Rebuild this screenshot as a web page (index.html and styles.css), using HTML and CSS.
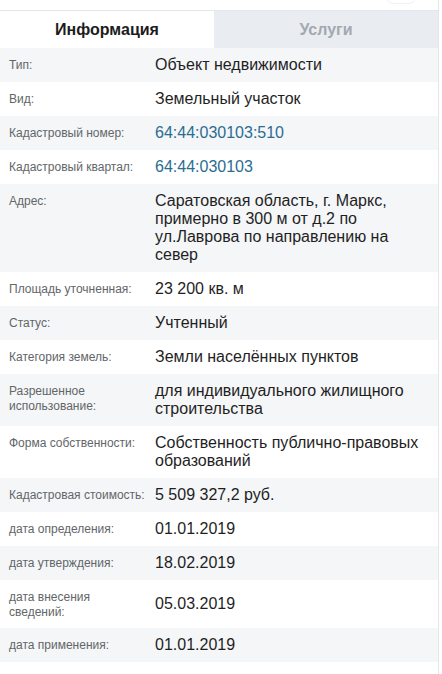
FILE: index.html
```html
<!DOCTYPE html>
<html lang="ru">
<head>
<meta charset="utf-8">
<link rel="stylesheet" href="styles.css">
</head>
<body>
<div class="panel">
  <div class="topbar"><span class="topbar-ghost"></span></div>
  <div class="tabs">
    <div class="tab tab-active">Информация</div>
    <div class="tab">Услуги</div>
  </div>
  <div class="rows">
    <div class="row row-alt"><div class="label">Тип:</div><div class="value">Объект недвижимости</div></div>
    <div class="row"><div class="label">Вид:</div><div class="value">Земельный участок</div></div>
    <div class="row row-alt"><div class="label">Кадастровый номер:</div><div class="value"><a class="link" href="#">64:44:030103:510</a></div></div>
    <div class="row"><div class="label">Кадастровый квартал:</div><div class="value"><a class="link" href="#">64:44:030103</a></div></div>
    <div class="row row-alt"><div class="label">Адрес:</div><div class="value">Саратовская область, г. Маркс, примерно в 300 м от д.2 по ул.Лаврова по направлению на север</div></div>
    <div class="row"><div class="label">Площадь уточненная:</div><div class="value">23 200 кв. м</div></div>
    <div class="row row-alt"><div class="label">Статус:</div><div class="value">Учтенный</div></div>
    <div class="row"><div class="label">Категория земель:</div><div class="value">Земли населённых пунктов</div></div>
    <div class="row row-alt"><div class="label">Разрешенное использование:</div><div class="value">для индивидуального жилищного строительства</div></div>
    <div class="row"><div class="label">Форма собственности:</div><div class="value">Собственность публично-правовых образований</div></div>
    <div class="row row-alt"><div class="label">Кадастровая стоимость:</div><div class="value">5 509 327,2 руб.</div></div>
    <div class="row"><div class="label">дата определения:</div><div class="value">01.01.2019</div></div>
    <div class="row row-alt"><div class="label">дата утверждения:</div><div class="value">18.02.2019</div></div>
    <div class="row"><div class="label">дата внесения сведений:</div><div class="value">05.03.2019</div></div>
    <div class="row row-alt"><div class="label">дата применения:</div><div class="value">01.01.2019</div></div>
  </div>
</div>
</body>
</html>
```

FILE: styles.css
```css
html, body {
  margin: 0;
  padding: 0;
  background: #ffffff;
}
body {
  font-family: "Liberation Sans", Arial, sans-serif;
  color: #1f1f1f;
}
.panel {
  width: 438px;
  min-height: 674px;
  border-right: 1px solid #e4e6e9;
  box-sizing: content-box;
}
.topbar {
  height: 10px;
  border-bottom: 1px solid #e3e6ea;
  position: relative;
  overflow: hidden;
}
.topbar-ghost {
  position: absolute;
  left: 386px;
  top: -12px;
  width: 28px;
  height: 14px;
  border-radius: 7px;
  border: 1px solid #f0f1f3;
}
.tabs {
  display: grid;
  grid-template-columns: 214px 1fr;
  height: 37px;
}
.tab {
  display: flex;
  align-items: center;
  justify-content: center;
  font-size: 16px;
  font-weight: bold;
  color: #a3a9b0;
  background: #e9edf1;
}
.tab-active {
  background: #ffffff;
  color: #1c1c1c;
}
.rows {
  display: flex;
  flex-direction: column;
}
.row {
  display: grid;
  grid-template-columns: 155px 1fr;
  padding: 8px 10px 8px 0;
  background: #ffffff;
}
.row-alt {
  background: #f4f6f8;
}
.label {
  align-self: start;
  padding: 2px 8px 0 9px;
  font-size: 12px;
  line-height: 15px;
  color: #626669;
}
.value {
  align-self: center;
  font-size: 16px;
  line-height: 18px;
  color: #1f1f1f;
}
.link {
  color: #2b6d92;
  text-decoration: none;
}
```
